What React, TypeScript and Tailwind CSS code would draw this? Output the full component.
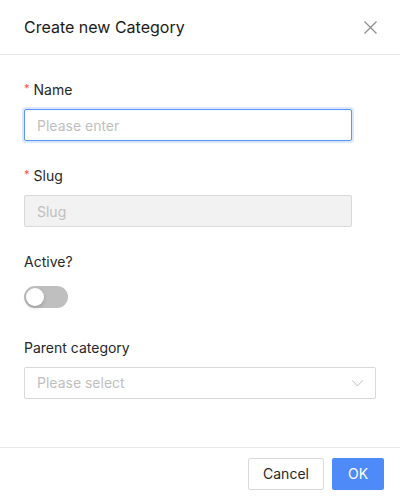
import { useState } from "react";

export default function App() {
  const [active, setActive] = useState(false);

  return (
    <div className="w-[400px] h-[500px] bg-white flex flex-col text-[#262626] font-['Inter','Liberation_Sans',sans-serif] text-sm">
      <header className="h-[55px] shrink-0 flex items-center justify-between pl-6 pr-[22px] border-b border-[#e8e8e8]">
        <h1 className="text-base font-normal text-[#1a1a1a]">Create new Category</h1>
        <button className="w-4 h-4 flex items-center justify-center text-[#8c8c8c]">
          <svg width="13" height="13" viewBox="0 0 13 13" fill="none" stroke="currentColor" strokeWidth="1.2">
            <path d="M0.5 0.5L12.5 12.5M12.5 0.5L0.5 12.5" />
          </svg>
        </button>
      </header>

      <main className="flex-1 px-6 pt-6 flex flex-col gap-6">
        <div className="flex flex-col gap-2">
          <label className="h-[22px] flex items-center leading-[22px]">
            <span className="text-[#ff4d4f] text-[11px] mr-1 -mt-1">*</span>Name
          </label>
          <input
            placeholder="Please enter"
            className="w-[328px] h-8 px-3 rounded-[2px] border border-[#5b93f7] shadow-[0_0_0_2px_rgba(74,137,246,0.2)] outline-none placeholder:text-[#bfbfbf]"
          />
        </div>

        <div className="flex flex-col gap-2">
          <label className="h-[22px] flex items-center leading-[22px]">
            <span className="text-[#ff4d4f] text-[11px] mr-1 -mt-1">*</span>Slug
          </label>
          <input
            disabled
            placeholder="Slug"
            className="w-[328px] h-8 px-3 rounded-[2px] border border-[#d9d9d9] bg-[#f2f2f2] outline-none placeholder:text-[#bfbfbf]"
          />
        </div>

        <div className="flex flex-col gap-2">
          <label className="h-[22px] flex items-center leading-[22px]">Active?</label>
          <div className="h-8 flex items-center">
            <button
              onClick={() => setActive((v) => !v)}
              className={`relative w-[44px] h-[22px] rounded-full ${active ? "bg-[#4e8af8]" : "bg-[#bfbfbf]"}`}
            >
              <span
                className={`absolute top-[2px] w-[18px] h-[18px] rounded-full bg-white shadow-[0_2px_4px_rgba(0,35,11,0.2)] ${active ? "left-[24px]" : "left-[2px]"}`}
              />
            </button>
          </div>
        </div>

        <div className="flex flex-col gap-2">
          <label className="h-[22px] flex items-center leading-[22px]">Parent category</label>
          <div className="w-[352px] h-8 px-3 flex items-center justify-between rounded-[2px] border border-[#d9d9d9]">
            <span className="text-[#bfbfbf]">Please select</span>
            <svg width="11" height="7" viewBox="0 0 11 7" fill="none" stroke="#bfbfbf" strokeWidth="1">
              <path d="M0.5 0.5L5.5 6L10.5 0.5" />
            </svg>
          </div>
        </div>
      </main>

      <footer className="h-[53px] shrink-0 border-t border-[#e8e8e8] flex items-center justify-end gap-2 px-4">
        <button className="w-[76px] h-8 rounded-[2px] border border-[#d9d9d9] bg-white text-[#262626]">Cancel</button>
        <button className="w-[52px] h-8 rounded-[2px] bg-[#4e8af8] text-white">OK</button>
      </footer>
    </div>
  );
}
